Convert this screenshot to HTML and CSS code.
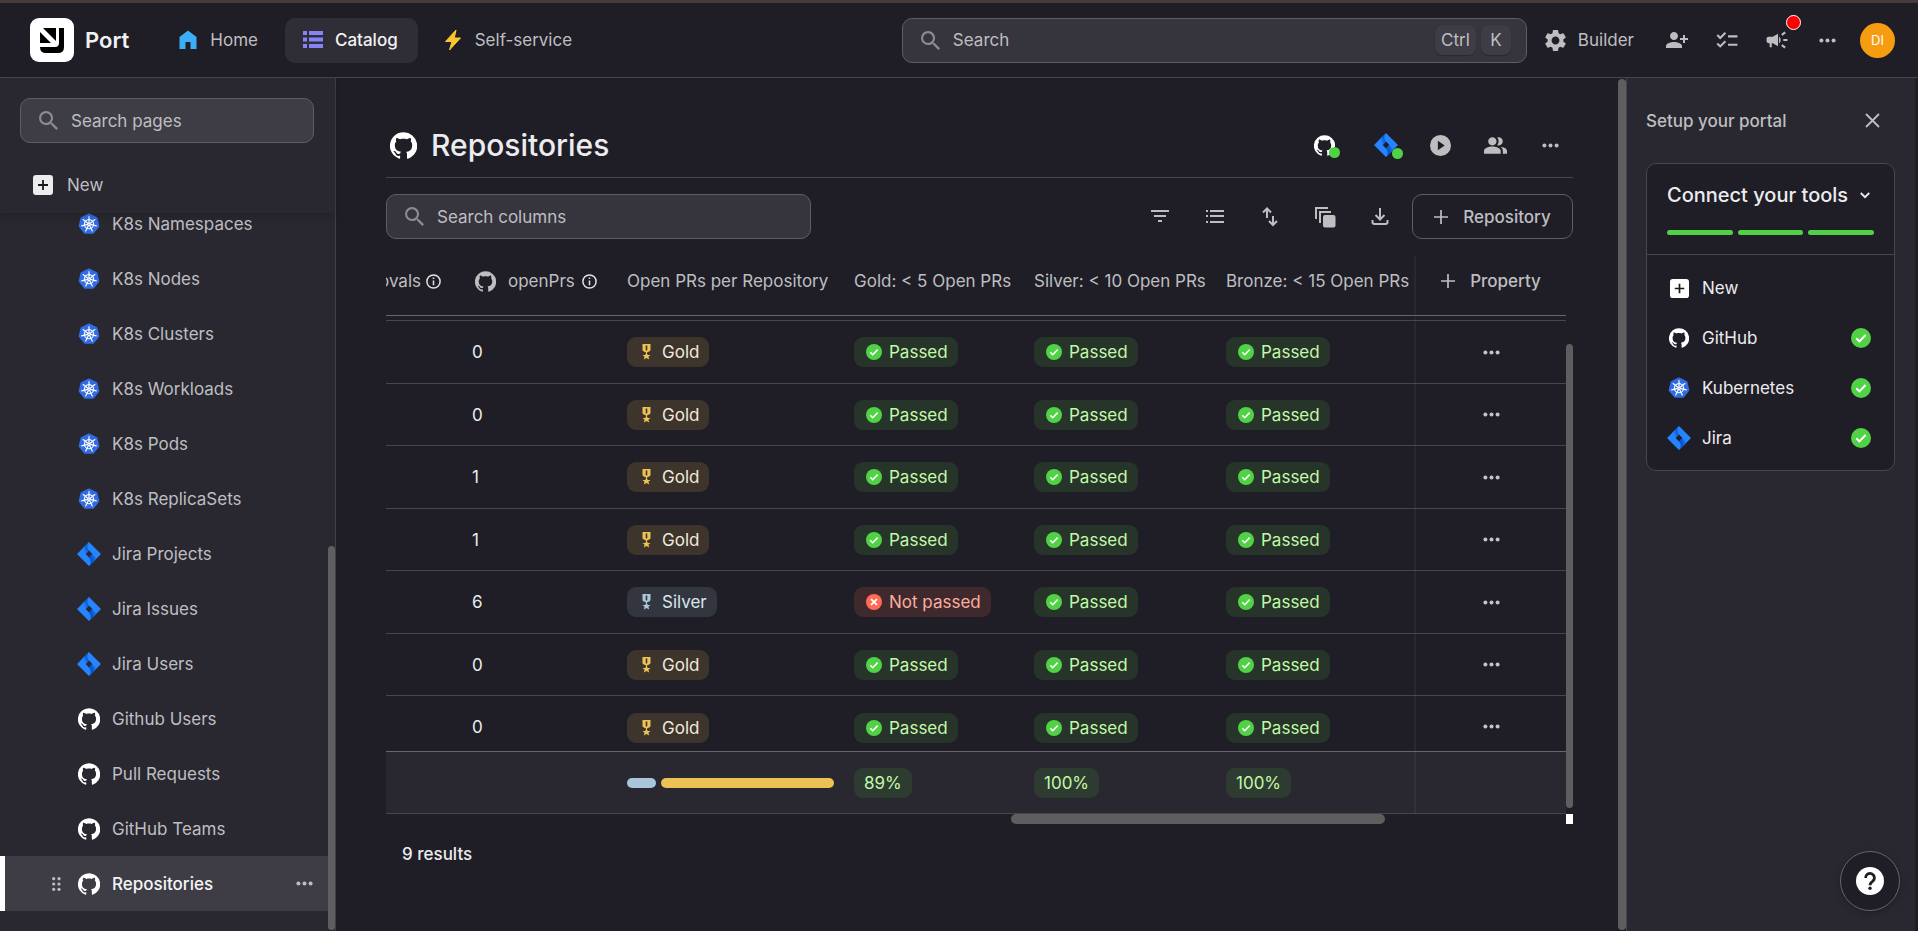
FILE: index.html
```html
<!DOCTYPE html>
<html lang="en">
<head>
<meta charset="utf-8">
<title>Port - Repositories</title>
<link rel="stylesheet" href="styles.css">
</head>
<body>
<svg class="sprite" aria-hidden="true">
  <linearGradient id="jira-a" x1="0.9" y1="0.4" x2="0.3" y2="0.8"><stop offset="0.1" stop-color="#0052cc"/><stop offset="1" stop-color="#2684ff"/></linearGradient>
  <linearGradient id="jira-b" x1="0.1" y1="0.6" x2="0.8" y2="0.2"><stop offset="0.3" stop-color="#0052cc"/><stop offset="1" stop-color="#1b6fe6"/></linearGradient>
  <symbol id="github" viewBox="1 1 22 22"><path fill="currentColor" d="M12 1.27a11 11 0 00-3.48 21.46c.55.09.73-.28.73-.55v-1.84c-3.03.64-3.67-1.46-3.67-1.46-.55-1.29-1.28-1.65-1.28-1.65-.92-.65.1-.65.1-.65 1.1 0 1.73 1.1 1.73 1.1.92 1.65 2.57 1.2 3.21.92a2 2 0 01.64-1.47c-2.47-.27-5.04-1.19-5.04-5.5 0-1.1.46-2.1 1.2-2.84a3.76 3.76 0 010-2.93s.91-.28 3.11 1.1c1.8-.49 3.7-.49 5.5 0 2.1-1.38 3.02-1.1 3.02-1.1a3.76 3.76 0 01.1 2.93c.83.74 1.2 1.74 1.2 2.94 0 4.21-2.57 5.13-5.04 5.4.45.37.82.92.82 2.02v3.03c0 .27.1.64.73.55A11 11 0 0012 1.27"/></symbol>
  <symbol id="jira" viewBox="0 0 24 24"><path fill="#2684ff" fill-rule="evenodd" d="M12 0 23.5 11.4q.6.6 0 1.2L12 24 .5 12.600q-.6-.6 0-1.200zM12 8.600 8.600 12 12 15.400 15.400 12z"/><path fill="url(#jira-a)" d="M12 0C9.600 2.600 9.800 6.300 12 8.600L8.600 12 4.800 7.200z"/><path fill="url(#jira-b)" d="M12 24c2.400-2.600 2.200-6.300 0-8.600L15.400 12l3.800 4.800z"/></symbol>
  <symbol id="k8s" viewBox="0 0 24 24"><path fill="#326ce5" stroke="#326ce5" stroke-width="2" stroke-linejoin="round" d="M12 1.500 20.200 5.500 22.300 14.400 16.600 21.600H7.400L1.700 14.400 3.800 5.500z"/><g fill="none" stroke="#fff" stroke-width="1.300" stroke-linecap="round"><circle cx="12" cy="12.200" r="5"/><path d="M12 12.200V4M12 12.200l6.400-5.100M12 12.200l8 1.800M12 12.200l3.600 7.400M12 12.200l-3.600 7.400M12 12.200 4 14M12 12.200 5.600 7.100"/></g><circle cx="12" cy="12.200" r="1.500" fill="#fff"/><circle cx="12" cy="12.200" r=".6" fill="#326ce5"/></symbol>
  <symbol id="search" viewBox="3 3 17.500 17.500"><path fill="currentColor" d="M15.5 14h-.79l-.28-.27A6.471 6.471 0 0 0 16 9.5 6.5 6.5 0 1 0 9.5 16c1.61 0 3.09-.59 4.23-1.57l.27.28v.79l5 4.99L20.49 19l-4.99-5zm-6 0C7.01 14 5 11.99 5 9.5S7.01 5 9.5 5 14 7.01 14 9.5 11.99 14 9.5 14z"/></symbol>
  <symbol id="new" viewBox="0 0 20 20"><rect width="20" height="20" rx="3" fill="currentColor"/><path stroke="#1a1a1e" stroke-width="1.800" d="M10 5v10M5 10h10"/></symbol>
  <symbol id="dots" viewBox="0 0 17 5"><g fill="currentColor"><circle cx="2.400" cy="2.500" r="2"/><circle cx="8.500" cy="2.500" r="2"/><circle cx="14.600" cy="2.500" r="2"/></g></symbol>
  <symbol id="plus" viewBox="0 0 14 14"><path stroke="currentColor" stroke-width="1.700" d="M7 0v14M0 7h14"/></symbol>
  <symbol id="info" viewBox="0 0 15 15"><circle cx="7.500" cy="7.500" r="6.600" fill="none" stroke="currentColor" stroke-width="1.500"/><path stroke="currentColor" stroke-width="1.500" d="M7.500 3.600v1.500M7.500 6.500v4.800"/></symbol>
  <symbol id="check" viewBox="0 0 20 20"><circle cx="10" cy="10" r="10" fill="#51d246"/><path fill="none" stroke="#fff" stroke-width="2" d="m5.300 10.300 3.100 3.100 6.200-6.400"/></symbol>
  <symbol id="cross" viewBox="0 0 20 20"><circle cx="10" cy="10" r="10" fill="#ff6b57"/><path fill="none" stroke="#fff" stroke-width="2.200" d="m6.300 6.300 7.400 7.400M13.700 6.300l-7.400 7.400"/></symbol>
  <symbol id="medal" viewBox="0 0 9 16"><path fill="currentColor" fill-rule="evenodd" d="M.5 0h8v5.800q0 1-.9 1.500L5 8.500v1l.8 1.400 2.700.2-2.100 1.700.8 2.700-2.700-1.500-2.700 1.500.8-2.700L.5 11.100l2.700-.2L4 9.500v-1L1.400 7.300Q.5 6.800.5 5.800zM3.700 1.600v4.600l.8.400.8-.4V1.600z"/></symbol>
</svg>

<header class="topbar">
  <a class="brand" href="#">
    <svg width="44" height="44" viewBox="0 0 44 44"><rect width="44" height="44" rx="9" fill="#fff"/><path fill="#000" d="M10 14v11h11zM13 10h13v13zM29 10h5v19q0 6-6 6H16q-6 0-6-6h15q4 0 4-4z"/></svg>
    <span>Port</span>
  </a>
  <nav class="tabs">
    <a class="tab" href="#"><svg class="tab-icon" viewBox="0 0 20 20"><path fill="#3aaef8" d="M10 .5 18.500 7v12h-6v-7h-5v7h-6V7z"/></svg>Home</a>
    <a class="tab tab-active" href="#"><svg class="tab-icon" viewBox="0 0 20 20"><path fill="#8583f7" d="M0 1h4v4H0zM6 1h14v4H6zM0 7.500h4v4H0zM6 7.500h14v4H6zM0 14h4v4H0zM6 14h14v4H6z"/></svg>Catalog</a>
    <a class="tab tab-last" href="#"><svg class="tab-icon" viewBox="0 0 20 20"><path fill="#fbc531" stroke="#fbc531" stroke-linejoin="round" d="M13 0 2.500 11.500H9L6.500 20 17.500 8H11.300z"/></svg>Self-service</a>
  </nav>
  <label class="search search-global">
    <svg class="search-icon"><use href="#search"/></svg>
    <input type="text" placeholder="Search" aria-label="Search">
    <kbd>Ctrl</kbd><kbd>K</kbd>
  </label>
  <button class="builder" type="button"><svg width="21" height="21" viewBox="2.600 2.400 18.800 19.200"><path fill="currentColor" d="M19.14 12.94c.04-.3.06-.61.06-.94 0-.32-.02-.64-.07-.94l2.03-1.58c.18-.14.23-.41.12-.61l-1.92-3.32c-.12-.22-.37-.29-.59-.22l-2.39.96c-.5-.38-1.03-.7-1.620-.94l-.36-2.54c-.04-.24-.24-.41-.48-.41h-3.840c-.24 0-.43.17-.47.41l-.36 2.54c-.59.24-1.130.57-1.620.94l-2.390-.96c-.22-.08-.47 0-.59.22L2.740 8.870c-.12.21-.08.47.12.61l2.030 1.580c-.05.3-.09.63-.09.94s.02.64.07.94l-2.030 1.580c-.18.14-.23.41-.12.61l1.920 3.320c.12.22.37.29.59.22l2.390-.96c.5.38 1.030.7 1.620.94l.36 2.540c.05.24.24.41.48.41h3.840c.24 0 .44-.17.47-.41l.36-2.540c.59-.24 1.130-.56 1.620-.94l2.390.96c.22.08.47 0 .59-.22l1.920-3.320c.12-.22.07-.47-.12-.61l-2.010-1.580zM12 15.600c-1.980 0-3.600-1.620-3.600-3.600s1.620-3.600 3.600-3.600 3.600 1.620 3.600 3.600-1.620 3.600-3.600 3.600z"/></svg>Builder</button>
  <div class="top-actions">
    <button type="button" aria-label="Invite user"><svg width="22" height="22" viewBox="1 1 22 22"><path fill="currentColor" d="M13 8c0-2.210-1.790-4-4-4S5 5.790 5 8s1.790 4 4 4 4-1.790 4-4zm2 2v2h3v3h2v-3h3v-2h-3V7h-2v3h-3zM1 18v2h16v-2c0-2.660-5.330-4-8-4s-8 1.340-8 4z"/></svg></button>
    <button type="button" aria-label="Checklist"><svg width="22" height="22" viewBox="1.500 1 21 21"><path fill="currentColor" d="M22 7h-9v2h9V7zm0 8h-9v2h9v-2zM5.540 11 2 7.460l1.410-1.410 2.120 2.120 4.240-4.240 1.410 1.410L5.540 11zm0 8L2 15.460l1.410-1.410 2.120 2.120 4.240-4.240 1.410 1.410L5.540 19z"/></svg></button>
    <button type="button" aria-label="Announcements"><svg width="22" height="22" viewBox="1.500 1.500 21 21"><path fill="currentColor" d="M18 11v2h4v-2h-4zm-2 6.610c.96.71 2.210 1.650 3.200 2.390.4-.53.8-1.070 1.200-1.600-.99-.74-2.240-1.680-3.200-2.400-.4.54-.8 1.080-1.200 1.610zM20.400 5.600c-.4-.53-.8-1.070-1.200-1.600-.99.74-2.240 1.680-3.200 2.400.4.53.8 1.070 1.200 1.600.96-.72 2.210-1.650 3.200-2.400zM4 9c-1.100 0-2 .9-2 2v2c0 1.100.9 2 2 2h1v4h2v-4h1l5 3V6L8 9H4zm11.500 3c0-1.330-.58-2.530-1.500-3.350v6.690c.92-.81 1.500-2.010 1.500-3.340z"/></svg><span class="alert-dot"></span></button>
    <button type="button" aria-label="More"><svg class="dots"><use href="#dots"/></svg></button>
  </div>
  <button class="avatar" type="button">DI</button>
</header>

<div class="shell">
  <aside class="sidebar">
    <div class="sidebar-top">
      <label class="search">
        <svg class="search-icon"><use href="#search"/></svg>
        <input type="text" placeholder="Search pages" aria-label="Search pages">
      </label>
      <button class="new-page" type="button"><svg width="20" height="20"><use href="#new"/></svg>New</button>
    </div>
    <div class="sidebar-scroll">
      <nav class="pages">
        <a href="#"><svg class="page-icon"><use href="#k8s"/></svg>K8s Namespaces</a>
        <a href="#"><svg class="page-icon"><use href="#k8s"/></svg>K8s Nodes</a>
        <a href="#"><svg class="page-icon"><use href="#k8s"/></svg>K8s Clusters</a>
        <a href="#"><svg class="page-icon"><use href="#k8s"/></svg>K8s Workloads</a>
        <a href="#"><svg class="page-icon"><use href="#k8s"/></svg>K8s Pods</a>
        <a href="#"><svg class="page-icon"><use href="#k8s"/></svg>K8s ReplicaSets</a>
        <a href="#"><svg class="page-icon page-icon-lg"><use href="#jira"/></svg>Jira Projects</a>
        <a href="#"><svg class="page-icon page-icon-lg"><use href="#jira"/></svg>Jira Issues</a>
        <a href="#"><svg class="page-icon page-icon-lg"><use href="#jira"/></svg>Jira Users</a>
        <a href="#"><svg class="page-icon"><use href="#github"/></svg>Github Users</a>
        <a href="#"><svg class="page-icon"><use href="#github"/></svg>Pull Requests</a>
        <a href="#"><svg class="page-icon"><use href="#github"/></svg>GitHub Teams</a>
        <a class="page-active" href="#"><svg class="grip" viewBox="0 0 9 14"><g fill="currentColor"><circle cx="1.700" cy="1.700" r="1.600"/><circle cx="7" cy="1.700" r="1.600"/><circle cx="1.700" cy="7" r="1.600"/><circle cx="7" cy="7" r="1.600"/><circle cx="1.700" cy="12.300" r="1.600"/><circle cx="7" cy="12.300" r="1.600"/></g></svg><svg class="page-icon"><use href="#github"/></svg>Repositories<svg class="dots"><use href="#dots"/></svg></a>
      </nav>
      <div class="track"><span class="thumb thumb-pages"></span></div>
    </div>
  </aside>

  <main class="content">
    <div class="title-row">
      <svg class="title-icon"><use href="#github"/></svg>
      <h1>Repositories</h1>
      <div class="icon-row">
        <button class="wide" type="button" aria-label="GitHub integration"><span class="status"><svg width="21" height="21"><use href="#github"/></svg></span></button>
        <button type="button" aria-label="Jira integration"><span class="status"><svg width="24" height="24"><use href="#jira"/></svg></span></button>
        <button type="button" aria-label="Actions"><svg width="21" height="21" viewBox="0 0 20 20"><path fill="currentColor" fill-rule="evenodd" d="M10 0a10 10 0 1 0 0 20 10 10 0 0 0 0-20zM7.500 5.500 14 10l-6.500 4.500z"/></svg></button>
        <button type="button" aria-label="Permissions"><svg width="23" height="23" viewBox="1 1 22 22"><path fill="currentColor" d="M16.670 13.130C18.040 14.060 19 15.320 19 17v3h4v-3c0-2.180-3.570-3.470-6.330-3.870zM15 12c2.210 0 4-1.790 4-4s-1.790-4-4-4c-.47 0-.91.1-1.330.24C14.500 5.270 15 6.580 15 8s-.5 2.730-1.330 3.760c.42.14.86.24 1.330.24zM9 12c2.210 0 4-1.790 4-4s-1.790-4-4-4-4 1.790-4 4 1.790 4 4 4zm0 1c-2.670 0-8 1.340-8 4v3h16v-3c0-2.660-5.330-4-8-4z"/></svg></button>
        <button type="button" aria-label="More"><svg class="dots"><use href="#dots"/></svg></button>
      </div>
    </div>
    <div class="tool-row">
      <label class="search search-columns">
        <svg class="search-icon"><use href="#search"/></svg>
        <input type="text" placeholder="Search columns" aria-label="Search columns">
      </label>
      <div class="icon-row">
        <button type="button" aria-label="Filter"><svg width="20" height="20" viewBox="0 0 20 20"><path stroke="currentColor" stroke-width="2" d="M1 4h18M4 9h12M8 14h4"/></svg></button>
        <button type="button" aria-label="Group"><svg width="20" height="20" viewBox="0 0 20 20"><path stroke="currentColor" stroke-width="2" d="M1 4h2M5 4h14M1 9h2M5 9h14M1 15h2M5 15h14"/></svg></button>
        <button type="button" aria-label="Sort"><svg width="20" height="20" viewBox="0 0 20 20"><path fill="none" stroke="currentColor" stroke-width="2" d="M7 11V1.500M3 5.500l4-4 4 4M13 9v9M9 14l4 4 4-4"/></svg></button>
        <button type="button" aria-label="Layers"><svg width="22" height="22" viewBox="0 0 22 22"><path fill="none" stroke="currentColor" stroke-width="2" d="M2 13V2h12M6 17V6h11"/><rect x="9" y="9" width="12.500" height="12.500" rx="2" fill="currentColor"/></svg></button>
        <button type="button" aria-label="Download"><svg width="20" height="20" viewBox="0 0 20 20"><path fill="none" stroke="currentColor" stroke-width="2" d="M10 1v11M5.500 8 10 12.500 14.500 8M2.500 13v2q0 2 2 2h11q2 0 2-2v-2"/></svg></button>
        <button class="outlined" type="button"><svg width="14" height="14"><use href="#plus"/></svg>Repository</button>
      </div>
    </div>

    <div class="grid">
      <table>
        <colgroup><col class="c1"><col class="c2"><col class="c3"><col class="c4"><col class="c5"><col class="c6"><col class="c7"></colgroup>
        <thead>
          <tr>
            <th><div class="head head-end">Approvals<svg class="info"><use href="#info"/></svg></div></th>
            <th><div class="head head-icon"><svg class="head-gh"><use href="#github"/></svg>openPrs<svg class="info"><use href="#info"/></svg></div></th>
            <th>Open PRs per Repository</th>
            <th>Gold: &lt; 5 Open PRs</th>
            <th>Silver: &lt; 10 Open PRs</th>
            <th>Bronze: &lt; 15 Open PRs</th>
            <th class="act"><button class="property" type="button"><svg width="14" height="14"><use href="#plus"/></svg>Property</button></th>
          </tr>
        </thead>
        <tbody>
          <tr class="peek"><td></td><td></td><td></td><td></td><td></td><td></td><td class="act"></td></tr>
          <tr><td></td><td>0</td><td><span class="pill gold"><svg><use href="#medal"/></svg>Gold</span></td><td><span class="pill ok"><svg><use href="#check"/></svg>Passed</span></td><td><span class="pill ok"><svg><use href="#check"/></svg>Passed</span></td><td><span class="pill ok"><svg><use href="#check"/></svg>Passed</span></td><td class="act"><button type="button" aria-label="Row menu"><svg class="dots"><use href="#dots"/></svg></button></td></tr>
          <tr><td></td><td>0</td><td><span class="pill gold"><svg><use href="#medal"/></svg>Gold</span></td><td><span class="pill ok"><svg><use href="#check"/></svg>Passed</span></td><td><span class="pill ok"><svg><use href="#check"/></svg>Passed</span></td><td><span class="pill ok"><svg><use href="#check"/></svg>Passed</span></td><td class="act"><button type="button" aria-label="Row menu"><svg class="dots"><use href="#dots"/></svg></button></td></tr>
          <tr><td></td><td>1</td><td><span class="pill gold"><svg><use href="#medal"/></svg>Gold</span></td><td><span class="pill ok"><svg><use href="#check"/></svg>Passed</span></td><td><span class="pill ok"><svg><use href="#check"/></svg>Passed</span></td><td><span class="pill ok"><svg><use href="#check"/></svg>Passed</span></td><td class="act"><button type="button" aria-label="Row menu"><svg class="dots"><use href="#dots"/></svg></button></td></tr>
          <tr><td></td><td>1</td><td><span class="pill gold"><svg><use href="#medal"/></svg>Gold</span></td><td><span class="pill ok"><svg><use href="#check"/></svg>Passed</span></td><td><span class="pill ok"><svg><use href="#check"/></svg>Passed</span></td><td><span class="pill ok"><svg><use href="#check"/></svg>Passed</span></td><td class="act"><button type="button" aria-label="Row menu"><svg class="dots"><use href="#dots"/></svg></button></td></tr>
          <tr><td></td><td>6</td><td><span class="pill silver"><svg><use href="#medal"/></svg>Silver</span></td><td><span class="pill bad"><svg><use href="#cross"/></svg>Not passed</span></td><td><span class="pill ok"><svg><use href="#check"/></svg>Passed</span></td><td><span class="pill ok"><svg><use href="#check"/></svg>Passed</span></td><td class="act"><button type="button" aria-label="Row menu"><svg class="dots"><use href="#dots"/></svg></button></td></tr>
          <tr><td></td><td>0</td><td><span class="pill gold"><svg><use href="#medal"/></svg>Gold</span></td><td><span class="pill ok"><svg><use href="#check"/></svg>Passed</span></td><td><span class="pill ok"><svg><use href="#check"/></svg>Passed</span></td><td><span class="pill ok"><svg><use href="#check"/></svg>Passed</span></td><td class="act"><button type="button" aria-label="Row menu"><svg class="dots"><use href="#dots"/></svg></button></td></tr>
          <tr class="cut"><td></td><td>0</td><td><span class="pill gold"><svg><use href="#medal"/></svg>Gold</span></td><td><span class="pill ok"><svg><use href="#check"/></svg>Passed</span></td><td><span class="pill ok"><svg><use href="#check"/></svg>Passed</span></td><td><span class="pill ok"><svg><use href="#check"/></svg>Passed</span></td><td class="act"><button type="button" aria-label="Row menu"><svg class="dots"><use href="#dots"/></svg></button></td></tr>
        </tbody>
        <tfoot>
          <tr><td></td><td></td><td><div class="share"><span class="share-silver" style="flex-grow:1"></span><span class="share-gold" style="flex-grow:6"></span></div></td><td><span class="pill ok">89%</span></td><td><span class="pill ok">100%</span></td><td><span class="pill ok">100%</span></td><td class="act"></td></tr>
        </tfoot>
      </table>
      <div class="vbar"><span></span></div>
      <div class="hbar"><span></span></div>
      <div class="corner"></div>
    </div>
    <p class="results">9 results</p>
  </main>

  <div class="track track-main"><span class="thumb"></span></div>

  <aside class="setup">
    <div class="setup-head"><h2>Setup your portal</h2><button type="button" aria-label="Close"><svg width="15" height="15" viewBox="0 0 15 15"><path stroke="currentColor" stroke-width="1.800" d="m1 1 13 13M14 1 1 14"/></svg></button></div>
    <section class="card">
      <div class="card-head">
        <button class="card-title" type="button">Connect your tools<svg width="10" height="7" viewBox="0 0 10 7"><path fill="none" stroke="currentColor" stroke-width="1.800" d="m.8 1 4.200 4.200L9.200 1"/></svg></button>
        <div class="steps"><span></span><span></span><span></span></div>
      </div>
      <ul>
        <li><svg class="tool-icon" width="19" height="19"><use href="#new"/></svg><span>New</span></li>
        <li><svg class="tool-icon" width="20" height="20"><use href="#github"/></svg><span>GitHub</span><svg width="20" height="20"><use href="#check"/></svg></li>
        <li><svg class="tool-icon" width="22" height="22"><use href="#k8s"/></svg><span>Kubernetes</span><svg width="20" height="20"><use href="#check"/></svg></li>
        <li><svg class="tool-icon" width="24" height="24"><use href="#jira"/></svg><span>Jira</span><svg width="20" height="20"><use href="#check"/></svg></li>
      </ul>
    </section>
  </aside>
</div>

<button class="help" type="button" aria-label="Help"><svg width="28" height="28" viewBox="0 0 28 28"><circle cx="14" cy="14" r="14" fill="#fff"/><path fill="none" stroke="#1f1e26" stroke-width="2.800" d="M9.600 11a4.400 4.400 0 1 1 7.300 3.100Q14 16 14 18.300"/><circle cx="14" cy="21.300" r="1.700" fill="#1f1e26"/></svg></button>
</body>
</html>
```

FILE: styles.css
```css
:root {
  --bg: #1f1e26;
  --panel: #292830;
  --field: #36353d;
  --line: #474749;
  --line-strong: #5e5e5e;
  --muted: #bebec1;
  --text: #ececee;
  --green: #51d246;
}
* { box-sizing: border-box; }
body {
  margin: 0;
  height: 100vh;
  display: flex;
  flex-direction: column;
  overflow: hidden;
  background: var(--bg);
  border-top: 3px solid #47393c;
  color: var(--muted);
  font: 17px/24px Inter, sans-serif;
}
button {
  margin: 0;
  padding: 0;
  border: 0;
  background: none;
  color: inherit;
  font: inherit;
  cursor: pointer;
}
a { color: inherit; text-decoration: none; }
svg { display: block; flex: none; }
.sprite { position: absolute; width: 0; height: 0; }
.dots { width: 17px; height: 5px; }

.search {
  display: flex;
  align-items: center;
  height: 45px;
  padding: 0 18px;
  border: 1px solid var(--line-strong);
  border-radius: 10px;
  background: var(--field);
}
.search-icon { width: 19px; height: 19px; margin-right: 13px; color: #8c8c90; }
.search input {
  flex: 1;
  min-width: 0;
  padding: 0;
  border: 0;
  outline: 0;
  background: none;
  color: var(--text);
  font: inherit;
}
.search input::placeholder { color: var(--muted); opacity: 1; }

/* Top bar */
.topbar {
  flex: none;
  display: flex;
  align-items: center;
  height: 75px;
  padding: 0 23px 0 30px;
  border-bottom: 1px solid var(--line);
}
.brand { display: flex; align-items: center; gap: 11px; color: #f2f2f3; font-size: 22px; font-weight: 600; }
.tabs { display: flex; gap: 7px; margin-left: 31px; }
.tab { display: flex; align-items: center; gap: 12px; height: 45px; padding: 0 20px 0 18px; border-radius: 10px; }
.tab-icon { width: 20px; height: 20px; }
.tab-active { background: #2f2e36; color: #f2f2f3; font-weight: 500; }
.search-global { flex: 0 1 625px; margin-left: auto; padding-right: 15px; }
.search kbd {
  margin-left: 5px;
  padding: 0 6px;
  min-width: 30px;
  height: 30px;
  border-radius: 8px;
  background: #3e3d45;
  box-shadow: 0 1px 1px #29282f;
  font: inherit;
  line-height: 30px;
  text-align: center;
}
.builder { display: flex; align-items: center; gap: 12px; margin-left: 18px; }
.top-actions { display: flex; margin-left: 18px; }
.top-actions button { position: relative; display: grid; place-items: center; width: 50px; height: 45px; }
.alert-dot {
  position: absolute;
  top: -3px;
  right: 1px;
  width: 15px;
  height: 15px;
  border: 1px solid #fff;
  border-radius: 50%;
  background: #f00;
}
.avatar { width: 35px; height: 35px; margin-left: 8px; border-radius: 50%; background: #f59c11; color: #fff; font-size: 13px; }

.shell { flex: 1; display: flex; min-height: 0; }

/* Pages */
.sidebar { flex: none; width: 336px; display: flex; flex-direction: column; background: var(--panel); border-right: 1px solid #414145; }
.sidebar-top { position: relative; z-index: 1; height: 135px; padding: 20px 21px 0 20px; background: var(--panel); box-shadow: 0 3px 8px rgba(0, 0, 0, .18); }
.sidebar-top .search { background: #3e3d45; }
.new-page { display: flex; align-items: center; gap: 14px; height: 40px; margin-top: 22px; padding-left: 13px; }
.new-page svg { color: #ececee; }
.sidebar-scroll { flex: 1; display: flex; min-height: 0; }
.pages { flex: 1; display: flex; flex-direction: column; justify-content: flex-end; padding-bottom: 20px; overflow: hidden; }
.pages a { flex: none; display: flex; align-items: center; height: 55px; padding-left: 78px; }
.page-icon { width: 22px; height: 22px; margin-right: 12px; color: #fff; }
.pages a .page-icon-lg { width: 24px; height: 24px; margin: 0 11px 0 -1px; }
.pages .page-active { padding: 0 15px 0 47px; border-left: 5px solid #fff; background: #3e3d45; color: #f5f5f6; font-weight: 500; }
.grip { width: 9px; height: 14px; margin-right: 17px; color: var(--muted); }
.page-active .dots { margin-left: auto; color: var(--muted); }
.track { flex: none; width: 7px; display: flex; flex-direction: column; justify-content: flex-end; padding: 1px 0; }
.thumb { height: 100%; border-radius: 4px; background: #5e5e5e; }
.thumb-pages { height: 53.6%; }
.track-main { width: 8px; }

/* Main */
.content { flex: 1; min-width: 0; padding: 35px 45px 0 50px; }
.title-row { display: flex; align-items: center; height: 65px; padding-left: 4px; border-bottom: 1px solid var(--line); }
.title-icon { width: 27px; height: 27px; margin-right: 14px; color: #fff; }
h1 { margin: 0; color: var(--text); font-size: 30px; line-height: 36px; font-weight: 500; }
.icon-row { display: flex; align-items: center; margin-left: auto; }
.icon-row button { display: grid; place-items: center; width: 55px; height: 45px; }
.title-row .icon-row { margin-right: -5px; }
.icon-row .wide { margin-right: 6px; }
.status { position: relative; color: #fff; }
.status::after { content: ""; position: absolute; right: -5px; bottom: -2px; width: 11px; height: 11px; border-radius: 50%; background: var(--green); }
.tool-row { display: flex; align-items: center; height: 77px; }
.search-columns { width: 425px; }
.icon-row .outlined { display: flex; justify-content: center; align-items: center; gap: 15px; width: 161px; margin-left: 5px; border: 1px solid var(--line-strong); border-radius: 10px; font-weight: 500; }

.grid { display: grid; grid-template-columns: 1fr 7px; }
table { width: 100%; table-layout: fixed; border-collapse: separate; border-spacing: 0; color: var(--text); }
.c1 { width: 76px; }
.c2 { width: 155px; }
.c3 { width: 227px; }
.c4 { width: 180px; }
.c5 { width: 192px; }
.c6 { width: 200px; }
.c7 { width: 150px; }
th, td { padding: 0 10px; text-align: left; white-space: nowrap; }
th { height: 61px; padding-bottom: 8px; border-bottom: 1px solid #66666a; color: var(--muted); font-weight: 400; overflow: hidden; }
td { height: 62px; border-bottom: 1px solid var(--line); }
tbody tr:nth-child(even) td { height: 63px; }
.act { padding: 0; text-align: center; box-shadow: -1px 0 3px rgba(255, 255, 255, .09); clip-path: inset(0 0 0 -4px); }
th.act { padding-bottom: 8px; }
.head { display: flex; align-items: center; gap: 7px; }
.head-end { justify-content: flex-end; gap: 5px; padding-right: 11px; }
.head-icon { padding-left: 3px; }
.head-gh { width: 21px; height: 21px; margin-right: 5px; }
.info { width: 15px; height: 15px; color: #e2e2e4; }
.act > button { display: block; margin: 0 auto; color: #c4c4c7; }
.act > .property { display: flex; align-items: center; gap: 15px; color: inherit; font-weight: 500; }
tbody .peek td, tbody tr.peek:nth-child(odd) td { height: 5px; }
tbody tr.cut:nth-child(even) td { height: 55px; border-bottom: 0; vertical-align: top; padding-top: 16px; line-height: 30px; }
.cut .act .dots { margin-top: 12px; }
tfoot td { height: 63px; border-top: 1px solid #66666a; background: var(--panel); }
.pill { display: inline-flex; align-items: center; height: 30px; padding: 0 10px; border-radius: 9px; vertical-align: middle; }
.pill svg { width: 16px; height: 16px; margin: 0 7px 0 2px; }
.pill.gold svg, .pill.silver svg { width: 9px; margin: 0 11px 0 5px; }
.gold { background: #3d342c; color: #f0eadd; }
.gold svg { color: #edc254; }
.silver { background: #33363f; color: #d9e6ef; }
.silver svg { color: #a9c6db; }
.ok { background: #273429; color: #c3f9a9; }
tfoot .ok { background: #2e3b30; }
.bad { background: #40292c; color: #fbaea2; }
.share { display: flex; gap: 5px; height: 10px; }
.share span { flex-basis: 0; border-radius: 5px; }
.share-silver { background: #a9c6db; }
.share-gold { background: #edc254; }
.vbar { display: flex; padding: 89px 0 6px; }
.vbar span { flex: 1; border-radius: 4px; background: #5e5e5e; }
.hbar { height: 10px; padding: 0 15.300% 0 53%; }
.hbar span { display: block; height: 100%; border-radius: 5px; background: #5e5e5e; }
.corner { background: #fff; }
.results { margin: 18px 0 0 16px; color: var(--text); font-weight: 500; }

/* Setup */
.setup { flex: none; width: 292px; padding: 20px 20px 0 19px; background: var(--panel); border-left: 1px solid var(--line); border-right: 3px solid var(--bg); }
.setup-head { display: flex; align-items: center; justify-content: space-between; height: 45px; padding-right: 15px; }
.setup-head h2 { margin: 0; font-size: 17px; line-height: 24px; font-weight: 500; }
.card { margin-top: 20px; border: 1px solid var(--line); border-radius: 10px; background: var(--bg); color: var(--text); }
.card-head { padding: 19px 20px; border-bottom: 1px solid var(--line); }
.card-title { display: flex; align-items: center; gap: 12px; font-size: 20px; line-height: 24px; font-weight: 500; white-space: nowrap; }
.steps { display: flex; gap: 5px; margin-top: 23px; }
.steps span { flex: 1; height: 5px; border-radius: 3px; background: var(--green); }
.card ul { margin: 0; padding: 8px 23px 7px 20px; list-style: none; }
.card li { display: grid; grid-template-columns: 24px 1fr 20px; gap: 11px; align-items: center; height: 50px; }
.tool-icon { justify-self: center; color: #fff; }

.help {
  position: fixed;
  right: 18px;
  bottom: 20px;
  display: grid;
  place-items: center;
  width: 60px;
  height: 60px;
  border: 1px solid #666;
  border-radius: 50%;
  background: var(--bg);
  box-shadow: 0 2px 6px rgba(0, 0, 0, .25);
}
```
